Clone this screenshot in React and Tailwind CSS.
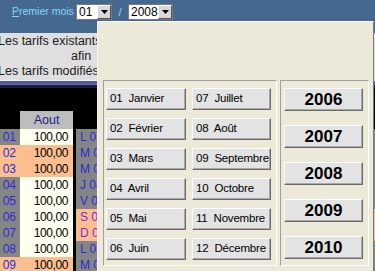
import React from 'react';

const months = [
  ['01', 'Janvier'], ['07', 'Juillet'],
  ['02', 'Février'], ['08', 'Août'],
  ['03', 'Mars'], ['09', 'Septembre'],
  ['04', 'Avril'], ['10', 'Octobre'],
  ['05', 'Mai'], ['11', 'Novembre'],
  ['06', 'Juin'], ['12', 'Décembre'],
];

const years = ['2006', '2007', '2008', '2009', '2010'];

// aout 2008 puis septembre 2008
const rows = [
  ['V 01', 'L 01'], ['S 02', 'M 02'], ['D 03', 'M 03'],
  ['L 04', 'J 04'], ['M 05', 'V 05'], ['M 06', 'S 06'],
  ['J 07', 'D 07'], ['V 08', 'L 08'], ['S 09', 'M 09'],
];

const isWeekend = (d) => d.startsWith('S') || d.startsWith('D');

function Combo({ value, width }) {
  return (
    <div className={`flex h-[16px] bg-white border border-[#7b7b7b] ${width}`}>
      <span className="flex-1 pl-[2px] text-[12px] leading-[14px] text-black">{value}</span>
      <span className="flex w-[14px] items-center justify-center bg-[#d8d8d8] border border-t-white border-l-white border-r-[#555] border-b-[#555]">
        <svg width="7" height="4" viewBox="0 0 7 4">
          <path d="M0 0h7L3.5 4z" fill="#000" />
        </svg>
      </span>
    </div>
  );
}

function Btn({ children, className }) {
  return (
    <button
      type="button"
      className={`bg-[#e3e3e3] border border-t-white border-l-white border-r-[#6a6a6a] border-b-[#6a6a6a] shadow-[inset_-1px_-1px_0_#a9a9a9] text-black ${className}`}
    >
      {children}
    </button>
  );
}

export default function App() {
  return (
    <div className="relative w-[375px] h-[271px] overflow-hidden bg-black font-['Liberation_Sans',Arial,sans-serif]">
      {/* barre du haut */}
      <div className="h-[33px] bg-[#45688f] flex items-start pt-[4px] pl-[12px]">
        <div className="flex h-[16px] items-center">
          <span className="text-[10.5px] text-[#86d8fb] w-[64px]">
            <span className="underline">P</span>remier mois
          </span>
          <Combo value="01" width="w-[36px]" />
          <span className="w-[16px] text-center text-[11px] text-[#86d8fb]">/</span>
          <Combo value="2008" width="w-[45px]" />
        </div>
      </div>

      {/* texte d'info */}
      <div className="h-[47px] bg-[#dfdfdf] text-[12.5px] leading-[15px] text-[#1a1a1a] pt-[1px] overflow-hidden">
        <div className="whitespace-nowrap ml-[-2px]">Les tarifs existants sont affichés</div>
        <div className="whitespace-nowrap pl-[71px]">afin</div>
        <div className="whitespace-nowrap ml-[-2px]">Les tarifs modifiés</div>
      </div>
      <div className="h-[1px] bg-[#f2f2f2]" />
      <div className="h-[3px] bg-[#4d5c99]" />
      <div className="h-[1px] bg-[#7a5cb0]" />
      <div className="h-[3px] bg-[#1c1c36]" />
      <div className="h-[23px] bg-black" />

      {/* tableau */}
      <div className="flex h-[18px]">
        <div className="w-[20px] bg-black" />
        <div className="w-[53px] bg-[#bdbdbd] flex items-center justify-center text-[12.5px] text-[#1e1e86]">Aout</div>
        <div className="flex-1 bg-black" />
      </div>
      {rows.map(([a, b]) => (
        <div key={a} className="flex h-[16px] text-[12px] leading-[16px]">
          <div className={`w-[20px] overflow-hidden flex justify-end pr-[4px] whitespace-nowrap text-[#2d2ad8] ${isWeekend(a) ? 'bg-[#fbbf8f]' : 'bg-[#858585]'}`}>
            {a}
          </div>
          <div className={`w-[53px] text-right pr-[5px] tracking-[-0.4px] ${isWeekend(a) ? 'bg-[#fbbf8f]' : 'bg-[#fffff0]'}`}>
            100,00
          </div>
          <div className="w-[3px] bg-black" />
          <div className={`flex-1 pl-[4px] whitespace-nowrap text-[#2d2ad8] ${isWeekend(b) ? 'bg-[#fbbf8f] text-[#7a2ad0]' : 'bg-[#858585]'}`}>
            {b}
          </div>
        </div>
      ))}

      {/* popup de choix */}
      <div className="absolute left-[97px] top-[21px] w-[277px] h-[262px] bg-[#ece9d8] border border-t-white border-l-[#f4f4f4] border-r-[#7a7a7a] border-b-[#7a7a7a] pl-[5px] pt-[58px] pr-[3px]">
        <div className="flex gap-[3px]">
          <div className="w-[174px] h-[186px] border border-t-[#a0a0a0] border-l-[#a0a0a0] border-r-white border-b-white pl-[2px] pt-[7px]">
            <div className="grid grid-cols-[80px_79px] gap-x-[6px] gap-y-[8px]">
              {months.map(([n, m]) => (
                <Btn key={n} className="h-[22px] text-left pl-[3px] text-[11.5px] tracking-[-0.2px] whitespace-pre">
                  {`${n}  ${m}`}
                </Btn>
              ))}
            </div>
          </div>
          <div className="w-[89px] h-[186px] border border-t-[#a0a0a0] border-l-[#a0a0a0] border-r-white border-b-white pl-[3px] pt-[7px] flex flex-col gap-[14px]">
            {years.map((y) => (
              <Btn key={y} className="w-[79px] h-[23px] text-[17px] font-bold leading-[20px]">
                {y}
              </Btn>
            ))}
          </div>
        </div>
      </div>
    </div>
  );
}
